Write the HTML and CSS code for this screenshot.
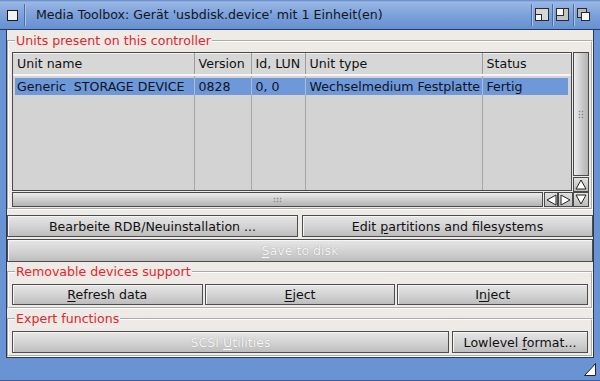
FILE: index.html
```html
<!DOCTYPE html>
<html lang="de">
<head>
    <meta charset="UTF-8">
    <title>Media Toolbox</title>
    <link rel="stylesheet" href="styles.css">
</head>
<body>
    <div class="window">
        <div class="titlebar">
            <span class="close-gadget">
                <svg width="12" height="12" viewBox="0 0 12 12"><rect x="0.5" y="0.5" width="10" height="10" fill="#f2f2f2" stroke="#1a1a1a"/></svg>
            </span>
            <span class="title">Media Toolbox: Gerät 'usbdisk.device' mit 1 Einheit(en)</span>
            <span class="gadget">
                <svg width="15" height="14" viewBox="0 0 15 14"><rect x="0.5" y="0.5" width="13" height="12" fill="#d6d6d6" stroke="#2a2a2a"/><rect x="0.5" y="6.5" width="6" height="6" fill="#f6f6f6" stroke="#2a2a2a"/></svg>
            </span>
            <span class="gadget">
                <svg width="15" height="14" viewBox="0 0 15 14"><rect x="0.5" y="0.5" width="12" height="12" fill="#c4c4c4" stroke="#2a2a2a"/><rect x="0.5" y="0.5" width="7" height="7" fill="#f6f6f6" stroke="#2a2a2a"/></svg>
            </span>
            <span class="gadget">
                <svg width="15" height="14" viewBox="0 0 15 14"><rect x="0.5" y="0.5" width="9" height="9" fill="#b8b8b8" stroke="#2a2a2a"/><rect x="4.5" y="4.5" width="8" height="8" fill="#f6f6f6" stroke="#2a2a2a"/></svg>
            </span>
        </div>

        <div class="content">
            <fieldset class="group units">
                <legend>Units present on this controller</legend>
                <div class="lister">
                    <div class="list">
                        <table>
                            <colgroup>
                                <col class="col-name">
                                <col class="col-version">
                                <col class="col-lun">
                                <col class="col-type">
                                <col>
                            </colgroup>
                            <thead>
                                <tr>
                                    <th>Unit name</th>
                                    <th>Version</th>
                                    <th>Id, LUN</th>
                                    <th>Unit type</th>
                                    <th>Status</th>
                                </tr>
                            </thead>
                            <tbody>
                                <tr class="spacer"><td></td><td></td><td></td><td></td><td></td></tr>
                                <tr class="selected">
                                    <td class="pre">Generic  STORAGE DEVICE</td>
                                    <td>0828</td>
                                    <td>0, 0</td>
                                    <td>Wechselmedium Festplatte</td>
                                    <td>Fertig</td>
                                </tr>
                                <tr class="filler"><td></td><td></td><td></td><td></td><td></td></tr>
                            </tbody>
                        </table>
                    </div>
                    <div class="vtrack"><span class="grip"></span></div>
                    <div class="arrow up">
                        <svg width="12" height="11" viewBox="0 0 12 11"><polygon points="6,1 11,10 1,10" fill="#fff" stroke="#222" stroke-linejoin="round"/></svg>
                    </div>
                    <div class="htrack"><span class="grip"></span></div>
                    <div class="arrow">
                        <svg width="11" height="12" viewBox="0 0 11 12"><polygon points="1,6 10,1 10,11" fill="#fff" stroke="#222" stroke-linejoin="round"/></svg>
                    </div>
                    <div class="arrow">
                        <svg width="11" height="12" viewBox="0 0 11 12"><polygon points="10,6 1,1 1,11" fill="#fff" stroke="#222" stroke-linejoin="round"/></svg>
                    </div>
                    <div class="arrow">
                        <svg width="12" height="11" viewBox="0 0 12 11"><polygon points="6,10 11,1 1,1" fill="#fff" stroke="#222" stroke-linejoin="round"/></svg>
                    </div>
                </div>
            </fieldset>

            <div class="button-row top-row">
                <button class="btn">Bearbeite RDB/Neuinstallation ...</button>
                <button class="btn">Edit <u>p</u>artitions and filesystems</button>
            </div>
            <button class="btn disabled save"><u>S</u>ave to disk</button>

            <fieldset class="group">
                <legend>Removable devices support</legend>
                <div class="button-row">
                    <button class="btn"><u>R</u>efresh data</button>
                    <button class="btn"><u>E</u>ject</button>
                    <button class="btn">I<u>n</u>ject</button>
                </div>
            </fieldset>

            <fieldset class="group">
                <legend>Expert functions</legend>
                <div class="button-row expert-row">
                    <button class="btn disabled">SCSI <u>U</u>tilities</button>
                    <button class="btn lowlevel">Lowlevel <u>f</u>ormat...</button>
                </div>
            </fieldset>
        </div>

        <div class="statusbar">
            <svg width="14" height="15" viewBox="0 0 14 15"><path d="M12.5 1.5 L12.5 13.5 L1.5 13.5 Q7 8 12.5 1.5 Z" fill="#fff" stroke="#222" stroke-linejoin="round"/></svg>
        </div>
    </div>
</body>
</html>
```

FILE: styles.css
```css
:root {
    --frame: #6a93d4;
    --panel: #eeebe6;
    --list-bg: #d3d3d3;
    --label: #e0262e;
    --edge: #4a4a4a;
}

* {
    margin: 0;
    padding: 0;
    box-sizing: border-box;
}

body {
    font-family: 'DejaVu Sans', 'Liberation Sans', sans-serif;
    font-size: 12.6px;
    color: #111;
    background: var(--frame);
}

.window {
    width: 600px;
    height: 381px;
    display: flex;
    flex-direction: column;
    background: var(--frame);
}

/* Title bar */
.titlebar {
    height: 30px;
    display: flex;
    align-items: center;
    padding-right: 6px;
    background: linear-gradient(#5d86c9 0, #9ab6e4 2px, #7ea2da 14px, #6590d2 29px);
    border-bottom: 1px solid #263a62;
}

.close-gadget {
    width: 25px;
    height: 22px;
    display: flex;
    align-items: center;
    padding-left: 7px;
    padding-top: 2px;
    border-right: 1px solid #4a6da6;
    box-shadow: 1px 0 0 #a8c2ea;
}

.title {
    flex: 1;
    padding-left: 11px;
    color: #0e1628;
    white-space: nowrap;
}

.gadget {
    width: 21px;
    height: 22px;
    display: flex;
    align-items: center;
    justify-content: center;
    border-left: 1px solid #4a6da6;
    box-shadow: inset 1px 0 0 #a8c2ea;
}

/* Main panel */
.content {
    flex: 1;
    margin: 0 6px;
    background: var(--panel);
    border: 1px solid #26385c;
    border-top: none;
    display: flex;
    flex-direction: column;
}

.content > * {
    flex: none;
}

.group {
    border: 2px groove #ffffff;
    padding: 5px 3px 2px;
    margin-top: 3px;
    min-width: 0;
}

.group legend {
    color: var(--label);
    font-size: 12.6px;
    line-height: 14px;
    padding: 0 1px;
    margin-left: 3px;
}

.units {
    margin-top: 4px;
    padding: 4px 2px 1px 3px;
}

/* Lister */
.lister {
    height: 155px;
    display: grid;
    grid-template-columns: 1fr 14px 15px 16px;
    grid-template-rows: 1fr 15px 15px;
}

.list {
    grid-column: 1 / 4;
    grid-row: 1 / 3;
    background: var(--list-bg);
    border: 1px solid var(--edge);
    overflow: hidden;
    margin-right: 1px;
    margin-bottom: 1px;
}

.list table {
    width: 100%;
    height: 100%;
    table-layout: fixed;
    border-collapse: collapse;
}

.col-name { width: 181px; }
.col-version { width: 57px; }
.col-lun { width: 54px; }
.col-type { width: 177px; }

.list th,
.list td {
    padding: 0 4px;
    text-align: left;
    font-weight: normal;
    white-space: nowrap;
    overflow: hidden;
    border-right: 1px solid #a7a7a7;
}

.list th:last-child,
.list td:last-child {
    border-right: none;
}

.list th {
    height: 21px;
    background: #d7d7d7;
    border-top: 1px solid #f2f2f2;
    border-bottom: 2px solid #f4f4f4;
    border-right-color: #9c9c9c;
}

.list .spacer td {
    height: 3px;
}

.list .selected td {
    height: 17px;
    background: #6e98d8;
    color: #0c1424;
    border-right-color: #a9bcd8;
}

.list .selected td:first-child {
    box-shadow: inset 2px 0 0 var(--list-bg);
}

.list .selected td:last-child {
    box-shadow: inset -3px 0 0 var(--list-bg);
}

.list .pre {
    white-space: pre;
}

.vtrack {
    grid-column: 4;
    grid-row: 1;
    border: 1px solid var(--edge);
    background: linear-gradient(90deg, #ececec, #c8c8c8 60%, #b4b4b4);
    display: flex;
    align-items: center;
    justify-content: center;
    margin-bottom: 1px;
}

.htrack {
    grid-column: 1;
    grid-row: 3;
    border: 1px solid var(--edge);
    background: linear-gradient(#ececec, #c8c8c8 60%, #b4b4b4);
    display: flex;
    align-items: center;
    justify-content: center;
    margin-right: 1px;
}

.grip {
    width: 6px;
    height: 9px;
    background: radial-gradient(circle, #8a8a8a 0.7px, transparent 1.1px) 0 0 / 3px 3px;
}

.htrack .grip {
    width: 9px;
    height: 6px;
}

.arrow {
    border: 1px solid var(--edge);
    background: linear-gradient(#e2e2e2, #bcbcbc);
    display: flex;
    align-items: center;
    justify-content: center;
}

.arrow.up {
    grid-column: 4;
    grid-row: 2;
}

/* Buttons */
.button-row {
    display: flex;
    gap: 2px;
}

.top-row {
    gap: 4px;
    margin-top: 5px;
}

.expert-row {
    gap: 3px;
}

.btn {
    flex: 1;
    height: 21px;
    font: inherit;
    color: #111;
    border: 1px solid #4d4d4d;
    background: linear-gradient(#e6e6e6, #d2d2d2 55%, #bdbdbd);
    box-shadow: inset 1px 1px 0 #f6f6f6;
    text-align: center;
}

.btn u {
    text-underline-offset: 2px;
}

.btn.disabled {
    color: #f7f7f7;
    text-shadow: 0 0 1px #8c8c8c;
}

.top-row .btn,
.expert-row .btn {
    height: 22px;
}

.save {
    margin-top: 2px;
}

.lowlevel {
    flex: 0 0 136px;
}

/* Bottom border */
.statusbar {
    height: 23px;
    display: flex;
    justify-content: flex-end;
    align-items: flex-end;
    padding: 0 3px 3px 0;
    border-bottom: 1px solid #3b5c94;
}
```
